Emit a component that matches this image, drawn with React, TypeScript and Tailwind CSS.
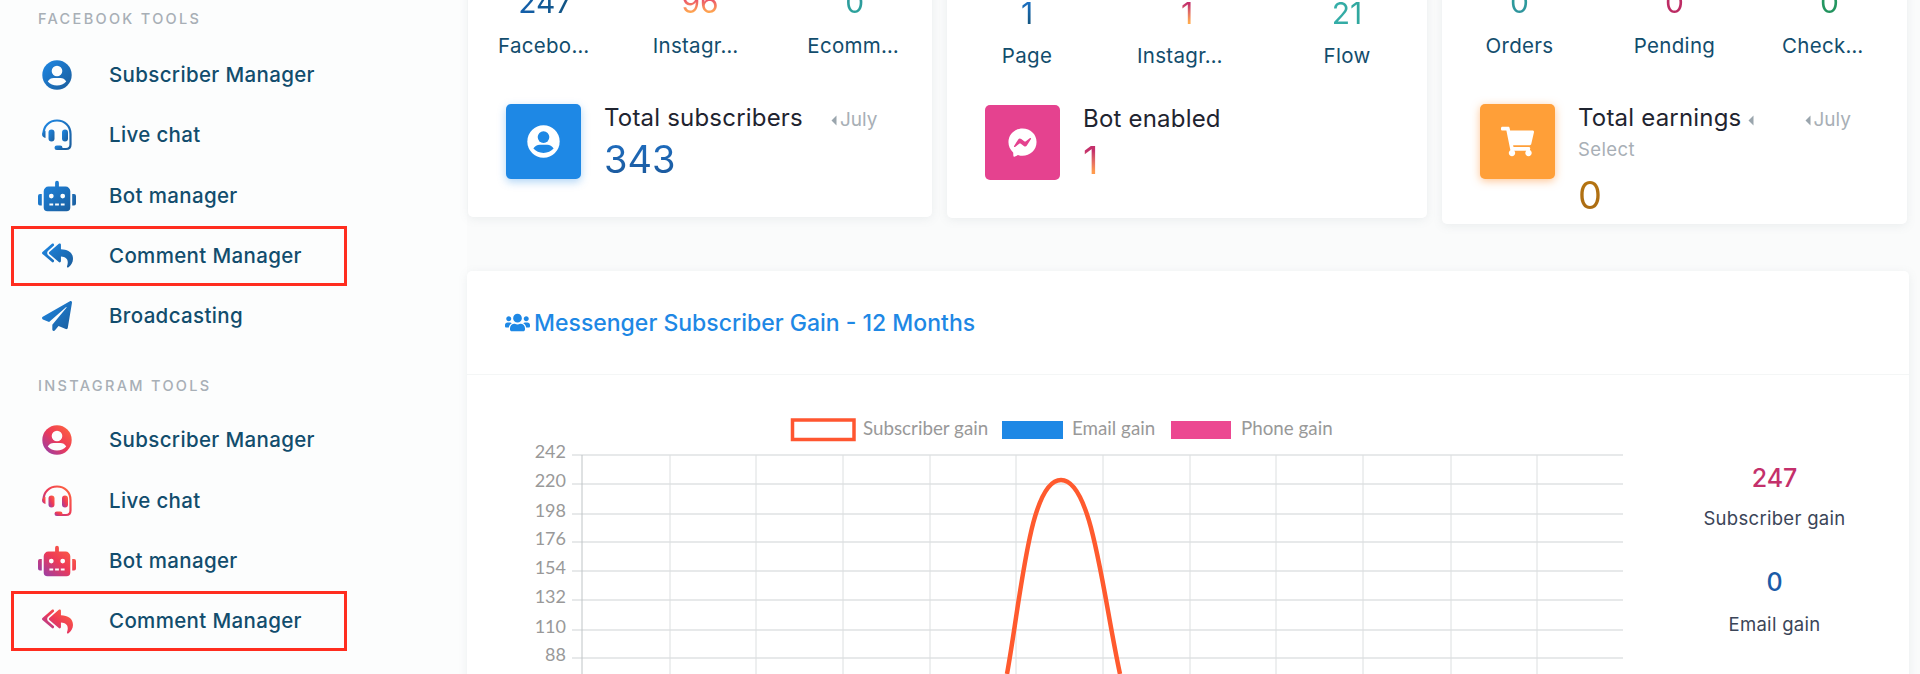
import React from "react";
import { FaRobot, FaReplyAll, FaPaperPlane, FaShoppingCart, FaUsers, FaFacebookMessenger } from "react-icons/fa";

const UserIcon = ({ fill, inner, size = 30 }: { fill: string; inner: string; size?: number }) => (
  <svg width={size} height={size} viewBox="0 0 30 30">
    <circle cx="15" cy="15" r="14.7" fill={fill} />
    <circle cx="15" cy="11" r="5.3" fill={inner} />
    <path d="M5.8 21.4c1.2-2.4 3.6-3.5 5.8-3.5h6.8c2.2 0 4.600 1.100 5.800 3.500-2.200 2.500-5.500 4-9.200 4s-7-1.500-9.200-4z" fill={inner} />
  </svg>
);

const HeadsetIcon = ({ fill }: { fill: string }) => (
  <svg width="32" height="32" viewBox="0 0 32 32">
    <path d="M2.500 15c0-8 5.800-13.500 13.500-13.500S29.500 7 29.500 15v10.500c0 3-2 4.500-4.500 4.500h-6" fill="none" stroke={fill} strokeWidth="2.200" />
    <path d="M1 15.500c0-1.800 1.500-3.600 3.500-3.800v7.300C2.500 18.700 1 17.300 1 15.500z" fill={fill} />
    <rect x="7.500" y="10.500" width="6" height="12" rx="3" fill={fill} />
    <rect x="21" y="10.500" width="6" height="12" rx="3" fill={fill} />
    <rect x="13.500" y="26.500" width="8" height="4.500" rx="2.250" fill={fill} />
  </svg>
);

const Caret = () => (
  <svg width="6" height="11" viewBox="0 0 6 11" className="shrink-0">
    <path d="M5.500 0.500v10L0.500 5.500z" fill="#9aa5ad" />
  </svg>
);

const fb = "url(#fbGrad)";
const ig = "url(#igGrad)";

const NavRow = ({ icon, label, boxed }: { icon: React.ReactNode; label: string; boxed?: boolean }) => (
  <div className={`flex h-[60.25px] w-[336px] items-center border-[3px] pl-[24px] ${boxed ? "border-[#ff2d1f]" : "border-transparent"}`}>
    <span className="flex w-[38px] shrink-0 items-center justify-center">{icon}</span>
    <span className="ml-[33px] text-[20.500px] leading-[28px] font-medium tracking-[0.35px] text-[#124d6d]">{label}</span>
  </div>
);

const Heading = ({ children, className }: { children: React.ReactNode; className: string }) => (
  <div className={`pl-[38px] text-[14.500px] leading-[20px] font-medium tracking-[0.16em] text-[#a8afb6] uppercase ${className}`}>{children}</div>
);

const Stat = ({ value, label, grad, left, tight }: { value: string; label: string; grad: string; left?: boolean; tight?: boolean }) => (
  <div className="min-w-0 flex-1 px-[30px]">
    <div className={`bg-clip-text text-center text-[30px] leading-[36px] text-transparent ${grad}`}>{value}</div>
    <div className={`${tight ? "mt-[11px]" : "mt-[12px]"} whitespace-nowrap text-[20.500px] leading-[28px] tracking-[0.3px] text-[#124d6d] ${left ? "text-left" : "text-center"}`}>{label}</div>
  </div>
);

const cardClass = "rounded-[5px] bg-white shadow-[0_2px_10px_rgba(120,140,150,0.12)]";

const ys: [string, number][] = [["242", 455], ["220", 484], ["198", 514], ["176", 542], ["154", 571], ["132", 600], ["110", 630], ["88", 658]];
const xs = [582, 670, 756, 843, 930, 1016, 1103, 1190, 1276, 1363, 1451, 1537];

const Chart = () => (
  <svg viewBox="467 375 1173 299" className="h-[299px] w-[1173px] shrink-0" style={{ fontFamily: "Lato, sans-serif" }}>
    <rect x="792.500" y="420" width="61.500" height="19.500" fill="#fff" stroke="#ff5630" strokeWidth="3.500" />
    <text x="863" y="435" fontSize="18.800" fill="#999">Subscriber gain</text>
    <rect x="1002" y="421" width="61" height="18" fill="#1e88e5" />
    <text x="1072" y="435" fontSize="18.800" fill="#999">Email gain</text>
    <rect x="1171" y="421" width="60" height="18" fill="#ec4891" />
    <text x="1241" y="435" fontSize="18.800" fill="#999">Phone gain</text>
    {ys.map(([t, y]) => (
      <g key={t}>
        <line x1="572" x2="1623" y1={y} y2={y} stroke="#dfe2e3" strokeWidth="1.500" />
        <text x="566" y={y + 3} fontSize="18" textAnchor="end" fill="#999">{t}</text>
      </g>
    ))}
    {xs.map((x, i) => (
      <line key={x} x1={x} x2={x} y1="455" y2="674" stroke={i === 0 ? "#bfc4c6" : "#dcdfe0"} strokeWidth="1" />
    ))}
    <path d="M1007 674C1022 590 1030 480 1061 480C1092 480 1102 590 1120 674" fill="none" stroke="#ff5a2e" strokeWidth="4.500" />
  </svg>
);

export default function App() {
  return (
    <div className="flex h-[674px] w-[1920px] overflow-hidden bg-[#fcfdfd] font-['Inter',sans-serif]">
      <svg className="absolute h-0 w-0">
        <defs>
          <linearGradient id="fbGrad" x1="0" y1="0" x2="1" y2="1">
            <stop offset="0" stopColor="#1e88e5" />
            <stop offset="1" stopColor="#1b5c9a" />
          </linearGradient>
          <linearGradient id="igGrad" x1="1" y1="0" x2="0" y2="1">
            <stop offset="0" stopColor="#ff6a3c" />
            <stop offset="0.5" stopColor="#ee3a57" />
            <stop offset="1" stopColor="#8a3fb5" />
          </linearGradient>
        </defs>
      </svg>

      <aside className="w-[467px] shrink-0 pt-[9px]">
        <Heading className="mb-[16px]">Facebook Tools</Heading>
        <div className="ml-[11px]">
          <NavRow icon={<UserIcon fill={fb} inner="#fcfdfd" />} label="Subscriber Manager" />
          <NavRow icon={<HeadsetIcon fill={fb} />} label="Live chat" />
          <NavRow icon={<FaRobot size={38} fill={fb} />} label="Bot manager" />
          <NavRow boxed icon={<FaReplyAll size={31} fill={fb} />} label="Comment Manager" />
          <NavRow icon={<FaPaperPlane size={30} fill={fb} />} label="Broadcasting" />
        </div>
        <Heading className="mt-[30px] mb-[14px]">Instagram Tools</Heading>
        <div className="ml-[11px]">
          <NavRow icon={<UserIcon fill={ig} inner="#fcfdfd" />} label="Subscriber Manager" />
          <NavRow icon={<HeadsetIcon fill={ig} />} label="Live chat" />
          <NavRow icon={<FaRobot size={38} fill={ig} />} label="Bot manager" />
          <NavRow boxed icon={<FaReplyAll size={31} fill={ig} />} label="Comment Manager" />
        </div>
      </aside>

      <main className="min-w-0 flex-1 bg-[#fafbfb] pr-[11px]">
        <div className="-mt-[16px] ml-[1px] flex items-start gap-[15px]">
          <section className={`w-[464px] pb-[35px] ${cardClass}`}>
            <div className="flex">
              <Stat value="247" label="Facebo…" left grad="bg-linear-to-r from-[#1565c0] to-[#124d6d]" />
              <Stat value="96" label="Instagr…" left grad="bg-linear-to-b from-[#e8486a] from-40% to-[#ffa94d] to-80%" />
              <Stat value="0" label="Ecomm…" left grad="bg-linear-to-b from-[#2f8f9d] to-[#2aa79b]" />
            </div>
            <div className="mt-[44px] ml-[38px] flex items-start">
              <div className="flex h-[75px] w-[75px] shrink-0 items-center justify-center rounded-[5px] bg-[#1e88e5] shadow-[0_3px_9px_rgba(30,136,229,0.35)]">
                <UserIcon fill="#fff" inner="#1e88e5" size={33} />
              </div>
              <div className="ml-[23px]">
                <div className="flex items-center">
                  <span className="text-[24px] leading-[28px] tracking-[0.2px] text-[#1f2430]">Total subscribers</span>
                  <span className="mt-[4px] ml-[28px] flex items-center gap-[3px] text-[19px] leading-[20px] text-[#a8afb6]"><Caret />July</span>
                </div>
                <div className="mt-[4px] bg-linear-to-b from-[#1e6fc4] to-[#1b5798] bg-clip-text text-[38px] leading-[46px] text-transparent">343</div>
              </div>
            </div>
          </section>

          <section className={`w-[480px] pt-[11px] pb-[35px] ${cardClass}`}>
            <div className="flex">
              <Stat tight value="1" label="Page" grad="bg-linear-to-b from-[#1e78d8] to-[#124d6d]" />
              <Stat tight value="1" label="Instagr…" left grad="bg-linear-to-b from-[#c4306b] from-25% to-[#ffa94d] to-75%" />
              <Stat tight value="21" label="Flow" grad="bg-linear-to-r from-[#3bb8b8] to-[#2a9d8f]" />
            </div>
            <div className="mt-[35px] ml-[38px] flex items-start">
              <div className="flex h-[75px] w-[75px] shrink-0 items-center justify-center rounded-[5px] bg-[#e5428f]">
                <FaFacebookMessenger size={29} color="#fff" />
              </div>
              <div className="ml-[23px]">
                <div className="text-[24px] leading-[28px] tracking-[0.2px] text-[#1f2430]">Bot enabled</div>
                <div className="mt-[4px] bg-linear-to-b from-[#c4306b] from-30% to-[#ff9a4d] to-75% bg-clip-text text-[38px] leading-[46px] text-transparent">1</div>
              </div>
            </div>
          </section>

          <section className={`w-[465px] pb-[6px] ${cardClass}`}>
            <div className="flex">
              <Stat value="0" label="Orders" grad="bg-linear-to-b from-[#2aa79b] to-[#2f8f9d]" />
              <Stat value="0" label="Pending" grad="bg-linear-to-b from-[#c4306b] to-[#b8285f]" />
              <Stat value="0" label="Check…" left grad="bg-linear-to-b from-[#2aa06a] to-[#1f8f5a]" />
            </div>
            <div className="mt-[44px] ml-[38px] flex items-start">
              <div className="flex h-[75px] w-[75px] shrink-0 items-center justify-center rounded-[5px] bg-[#ff9f38] shadow-[0_2px_9px_rgba(255,140,40,0.5)]">
                <FaShoppingCart size={33} color="#fff" />
              </div>
              <div className="ml-[23px]">
                <div className="flex items-center">
                  <span className="text-[24px] leading-[28px] tracking-[0.2px] text-[#1f2430]">Total earnings</span>
                  <span className="mt-[4px] ml-[6px]"><Caret /></span>
                  <span className="mt-[4px] ml-[51px] flex items-center gap-[3px] text-[19px] leading-[20px] text-[#a8afb6]"><Caret />July</span>
                </div>
                <div className="mt-[7px] text-[18.500px] leading-[20px] tracking-[0.4px] text-[#a8afb6]">Select</div>
                <div className="mt-[13px] bg-linear-to-b from-[#b8760f] to-[#a86a14] bg-clip-text text-[38px] leading-[46px] text-transparent">0</div>
              </div>
            </div>
          </section>
        </div>

        <section className={`mt-[47px] h-[420px] ${cardClass}`}>
          <div className="flex h-[104px] items-center gap-[4px] border-b border-[#f4f6f6] pl-[38px]">
            <FaUsers size={25} color="#1e88e5" />
            <h2 className="text-[23px] leading-[28px] font-medium text-[#1e88e5]">Messenger Subscriber Gain - 12 Months</h2>
          </div>
          <div className="flex">
            <Chart />
            <div className="flex-1 pt-[85px] text-center">
              <div className="text-[25px] leading-[36px] font-medium text-[#c4306b]">247</div>
              <div className="mt-[10px] text-[18.500px] leading-[24px] tracking-[0.3px] text-[#3b4558]">Subscriber gain</div>
              <div className="mt-[34px] text-[25px] leading-[36px] font-medium text-[#1b5ca8]">0</div>
              <div className="mt-[12px] text-[18.500px] leading-[24px] tracking-[0.3px] text-[#3b4558]">Email gain</div>
            </div>
          </div>
        </section>
      </main>
    </div>
  );
}
